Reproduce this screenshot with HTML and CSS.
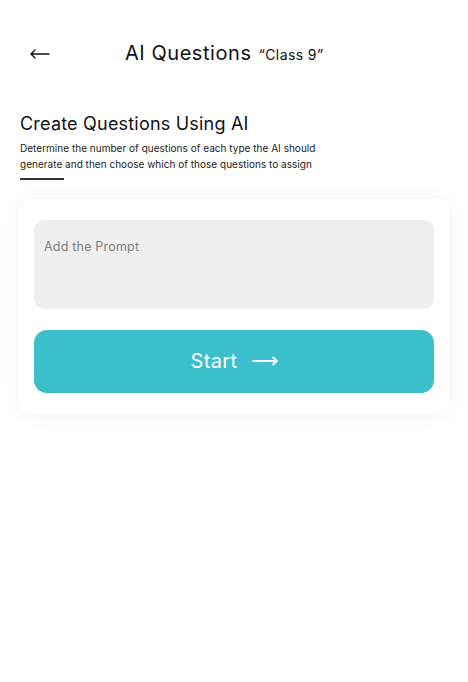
FILE: index.html
```html
<!DOCTYPE html>
<html>
<head>
<meta charset="utf-8">
<link rel="stylesheet" href="styles.css">
</head>
<body>
<div class="page">
  <header class="topbar">
    <span class="back">
      <svg width="20" height="10" viewBox="0 0 20 10"><path d="M1 5H19M1 5L5 1M1 5L5 9" fill="none" stroke="#111" stroke-width="1.4" stroke-linecap="round" stroke-linejoin="round"/></svg>
    </span>
    <h1 class="title">AI Questions <span class="sub">“Class 9”</span></h1>
  </header>
  <section class="intro">
    <h2 class="heading">Create Questions Using AI</h2>
    <p class="desc">Determine the number of questions of each type the AI should generate and then choose which of those questions to assign</p>
    <div class="rule"></div>
  </section>
  <div class="card">
    <div class="prompt">Add the Prompt</div>
    <button class="start">Start
      <svg width="26" height="10" viewBox="0 0 26 10"><path d="M1 5H25M25 5L21 1.5M25 5L21 8.5" fill="none" stroke="#fff" stroke-width="1.8" stroke-linecap="round" stroke-linejoin="round"/></svg>
    </button>
  </div>
</div>
</body>
</html>
```
FILE: styles.css
```css
* { box-sizing: border-box; }
html, body { margin: 0; padding: 0; background: #fff; }
body { font-family: "Inter", "Noto Sans", sans-serif; color: #111; }
.page { width: 468px; height: 682px; }
.topbar { display: flex; align-items: center; height: 48px; margin-top: 29px; padding-left: 30px; }
.back { display: flex; width: 20px; height: 10px; margin-top: 2px; }
.title { margin: 0 0 0 75px; font-size: 20px; font-weight: 400; letter-spacing: 0.55px; white-space: nowrap; }
.sub { font-size: 14px; margin-left: 1px; letter-spacing: 0.4px; }
.intro { padding: 36px 20px 0 20px; }
.heading { margin: 0; font-size: 18px; font-weight: 400; line-height: 22px; letter-spacing: 0.2px; }
.desc { margin: 5px 0 0 0; font-size: 10px; line-height: 16px; width: 320px; color: #222; letter-spacing: 0.02px; }
.rule { width: 44px; height: 2px; background: #333; margin-top: 6px; }
.card { margin: 19px 19px 0 19px; background: #fff; border-radius: 12px; padding: 21px 15px 21px 15px; box-shadow: 0 0 24px rgba(0,0,0,0.06); display: flex; flex-direction: column; gap: 21px; }
.prompt { height: 89px; background: #efefef; border-radius: 10px; padding: 19px 10px; font-size: 12.5px; color: #808080; letter-spacing: 0.2px; }
.start { height: 63px; border: none; border-radius: 13px; background: #3bbfca; color: #fff; font-family: "Inter", sans-serif; font-size: 20px; display: flex; align-items: center; justify-content: center; gap: 14px; padding: 0 0 2px 0; letter-spacing: 0.4px; }
```
